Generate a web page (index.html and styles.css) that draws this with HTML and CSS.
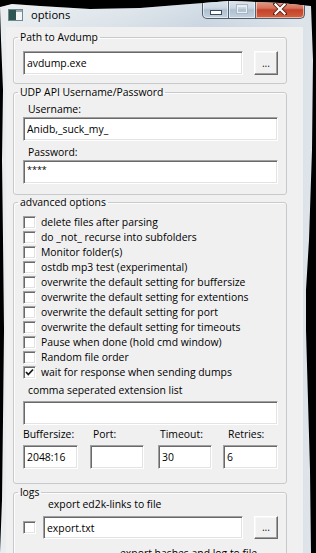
FILE: index.html
```html
<!DOCTYPE html>
<html>
<head>
<meta charset="utf-8">
<title>options</title>
<link rel="stylesheet" href="styles.css">
</head>
<body>
<div class="window">
  <div class="titlebar">
    <svg class="appicon" width="15" height="12" viewBox="0 0 15 12">
      <rect x="0" y="0" width="15" height="12" fill="#6f8a8c"/>
      <rect x="1" y="1" width="7" height="10" fill="#2f5553"/>
      <rect x="8" y="1" width="6" height="10" fill="#f4f6f6"/>
      <rect x="8" y="1" width="6" height="2" fill="#9aa9ab"/>
    </svg>
    <span class="title">options</span>
    <div class="caption">
      <div class="cbtn min"><span class="minbar"></span></div>
      <div class="cbtn max"><span class="maxbox"></span></div>
      <div class="cbtn close">
        <svg width="14" height="12" viewBox="0 0 14 12">
          <path d="M2 1 L12 11 M12 1 L2 11" stroke="#5a2418" stroke-width="4" stroke-linecap="square"/>
          <path d="M2.5 1.5 L11.5 10.5 M11.5 1.5 L2.5 10.5" stroke="#ffffff" stroke-width="2.2" stroke-linecap="square"/>
        </svg>
      </div>
    </div>
  </div>
  <div class="client">
    <fieldset class="group g1">
      <legend>Path to Avdump</legend>
      <div class="body b1">
        <div class="row">
          <input class="edit grow" value="avdump.exe" readonly>
          <button class="btn">...</button>
        </div>
      </div>
    </fieldset>

    <fieldset class="group g2">
      <legend>UDP API Username/Password</legend>
      <div class="body b2">
        <div class="lbl ind l-user">Username:</div>
        <input class="edit full e-user" value="Anidb,_suck_my_" readonly>
        <div class="lbl ind l-pass">Password:</div>
        <input class="edit full e-pass pw" value="****" readonly>
      </div>
    </fieldset>

    <fieldset class="group g3">
      <legend>advanced options</legend>
      <div class="body b3">
        <div class="checks">
          <div class="chk"><span class="box"></span><span>delete files after parsing</span></div>
          <div class="chk"><span class="box"></span><span>do _not_ recurse into subfolders</span></div>
          <div class="chk"><span class="box"></span><span>Monitor folder(s)</span></div>
          <div class="chk"><span class="box"></span><span>ostdb mp3 test (experimental)</span></div>
          <div class="chk"><span class="box"></span><span>overwrite the default setting for buffersize</span></div>
          <div class="chk"><span class="box"></span><span>overwrite the default setting for extentions</span></div>
          <div class="chk"><span class="box"></span><span>overwrite the default setting for port</span></div>
          <div class="chk"><span class="box"></span><span>overwrite the default setting for timeouts</span></div>
          <div class="chk"><span class="box"></span><span>Pause when done (hold cmd window)</span></div>
          <div class="chk"><span class="box"></span><span>Random file order</span></div>
          <div class="chk"><span class="box checked"><svg width="9" height="9" viewBox="0 0 9 9"><path d="M1 4 L3.3 6.5 L8 1.5" fill="none" stroke="#1a1a1a" stroke-width="1.8"/></svg></span><span>wait for response when sending dumps</span></div>
        </div>
        <div class="lbl ind l-ext">comma seperated extension list</div>
        <input class="edit full e-ext" value="" readonly>
        <div class="fields">
          <div class="fld f1"><div class="lbl">Buffersize:</div><input class="edit" value="2048:16" readonly></div>
          <div class="fld f2"><div class="lbl">Port:</div><input class="edit" value="" readonly></div>
          <div class="fld f3"><div class="lbl">Timeout:</div><input class="edit" value="30" readonly></div>
          <div class="fld f4"><div class="lbl">Retries:</div><input class="edit" value="6" readonly></div>
        </div>
      </div>
    </fieldset>

    <fieldset class="group g4">
      <legend>logs</legend>
      <div class="body b4">
        <div class="lbl l-export">export ed2k-links to file</div>
        <div class="row logrow">
          <span class="box"></span>
          <input class="edit grow" value="export.txt" readonly>
          <button class="btn">...</button>
        </div>
        <div class="lbl l-next">export hashes and log to file</div>
      </div>
    </fieldset>
  </div>
</div>
</body>
</html>
```

FILE: styles.css
```css
html, body {
  margin: 0;
  padding: 0;
}
body {
  background: #000;
  width: 316px;
  height: 553px;
  overflow: hidden;
  font-family: "Open Sans", "Noto Sans", sans-serif;
  font-size: 10.4px;
  color: #000;
}
.window {
  width: 316px;
  height: 553px;
  box-sizing: border-box;
  padding: 0 13px 0 6px;
  display: flex;
  flex-direction: column;
  background: linear-gradient(90deg, #e9edf0 0%, #d9e1e8 40%, #c9d5e0 65%, #dfe5ea 100%);
  clip-path: polygon(0 7px, 12px 4px, 40px 6px, 90px 9px, 140px 8px, 190px 4px, 230px 1px, 280px 3px, 311px 6px,
    313px 60px, 312px 150px, 309px 240px, 306px 290px, 306px 330px, 308px 400px, 310px 470px, 311px 553px,
    0 553px, 2px 500px, 3px 420px, 4px 330px, 3px 240px, 2px 160px, 3px 90px, 1px 40px);
}
.titlebar {
  height: 27px;
  flex: none;
  display: flex;
  align-items: center;
  padding-left: 2px;
  background: linear-gradient(180deg, rgba(255,255,255,0.25) 0%, rgba(255,255,255,0) 100%);
}
.appicon {
  margin-top: 2px;
  flex: none;
}
.title {
  margin-left: 8px;
  font-size: 11.2px;
  line-height: 16px;
  margin-top: 2px;
  color: #000;
}
.caption {
  margin-left: auto;
  align-self: flex-start;
  display: flex;
  margin-right: -2px;
}
.cbtn {
  height: 19px;
  box-sizing: border-box;
  border: 1px solid #4f5f6f;
  border-top: none;
  display: flex;
  align-items: center;
  justify-content: center;
  box-shadow: inset 0 0 0 1px rgba(255,255,255,0.55);
}
.min {
  width: 27px;
  border-radius: 0 0 0 5px;
  background: linear-gradient(180deg, #dfe7ee 0%, #c9d6e2 45%, #aebfcf 55%, #c4d2de 100%);
}
.max {
  width: 27px;
  border-left: none;
  background: linear-gradient(180deg, #dfe7ee 0%, #c9d6e2 45%, #aebfcf 55%, #c4d2de 100%);
}
.close {
  width: 49px;
  border-left: none;
  border-radius: 0 0 5px 0;
  background: linear-gradient(180deg, #e8a593 0%, #d7735a 45%, #c4422a 55%, #d2613f 100%);
}
.minbar {
  width: 10px;
  height: 3px;
  margin-top: 6px;
  background: #fff;
  border: 1px solid #3d4b5a;
}
.maxbox {
  width: 8px;
  height: 6px;
  border: 1px solid #e9eef3;
  box-shadow: 0 0 0 1px #a9b7c5, inset 0 1px 0 #e9eef3;
}
.client {
  flex: 1;
  background: #f0f0f0;
  padding: 3px 16px 0 7px;
  display: flex;
  flex-direction: column;
}
.group {
  margin: 0;
  padding: 0;
  min-width: 0;
  border: 1px solid #c6cacd;
  border-radius: 3px;
  box-shadow: inset 1px 1px 0 #fcfcfc;
}
.group legend {
  margin-left: 4px;
  padding: 0 2px;
  line-height: 14px;
  font-size: 10.4px;
}
.g2 { margin-top: 1px; }
.g4 { margin-top: 1px; }
.body {
  padding: 0 8px 0 9px;
  display: flex;
  flex-direction: column;
}
.b1 { padding-top: 7px; padding-bottom: 8px; }
.b2 { padding-top: 3px; padding-bottom: 10px; }
.b3 { padding-top: 6px; padding-bottom: 14px; }
.b4 { padding-top: 0; }
.row {
  display: flex;
  align-items: center;
  gap: 11px;
}
.grow { flex: 1; min-width: 0; }
.lbl {
  line-height: 15px;
  white-space: nowrap;
}
.ind { padding-left: 5px; }
.e-user { margin-top: 3px; }
.l-pass { margin-top: 4px; }
.e-pass { margin-top: 2px; }
.edit {
  box-sizing: border-box;
  height: 24px;
  margin: 0;
  padding: 0 3px;
  border: 1px solid;
  border-color: #a0a0a0 #ffffff #ffffff #a0a0a0;
  box-shadow: inset 1px 1px 0 #696969, inset -1px -1px 0 #e3e3e3;
  background: #fff;
  font-family: "Open Sans", "Noto Sans", sans-serif;
  font-size: 10.4px;
  color: #000;
  outline: none;
}
.full { width: 100%; }
.pw { font-size: 9px; padding-bottom: 5px; }
.btn {
  box-sizing: border-box;
  width: 24px;
  height: 24px;
  flex: none;
  margin: 0;
  padding: 0 0 4px 0;
  border: 1px solid;
  border-color: #ffffff #696969 #696969 #ffffff;
  box-shadow: inset -1px -1px 0 #a0a0a0, inset 1px 1px 0 #f8f8f8;
  background: #f0f0f0;
  font-family: "Open Sans", "Noto Sans", sans-serif;
  font-size: 10.4px;
  color: #222;
  line-height: 14px;
  display: flex;
  align-items: flex-end;
  justify-content: center;
}
.checks {
  display: flex;
  flex-direction: column;
}
.chk {
  height: 15px;
  display: flex;
  align-items: center;
  gap: 5px;
  white-space: nowrap;
  line-height: 15px;
}
.box {
  width: 13px;
  height: 13px;
  flex: none;
  box-sizing: border-box;
  border: 1px solid;
  border-color: #a0a0a0 #ffffff #ffffff #a0a0a0;
  box-shadow: inset 1px 1px 0 #696969, inset -1px -1px 0 #e3e3e3;
  background: #fff;
  display: flex;
  align-items: center;
  justify-content: center;
}
.l-ext { margin-top: 3px; }
.e-ext { margin-top: 3px; }
.fields {
  display: grid;
  grid-template-columns: 67px 68px 65px 55px;
  margin-top: 2px;
}
.fld {
  display: flex;
  flex-direction: column;
}
.fld .edit { margin-top: 3px; }
.f1 .edit { width: 55px; }
.f2 .edit { width: 54px; }
.f3 .edit { width: 54px; }
.f4 .edit { width: 55px; }
.f2 .lbl { padding-left: 3px; }
.f3 .lbl { padding-left: 2px; }
.f4 .lbl { padding-left: 5px; }
.l-export { margin-top: -2px; padding-left: 25px; }
.logrow { margin-top: 4px; gap: 0; }
.logrow .box { margin-right: 7px; }
.logrow .edit { height: 23px; }
.logrow .btn { margin-left: 11px; height: 23px; }
.l-next { margin-top: 7px; padding-left: 97px; }
```
